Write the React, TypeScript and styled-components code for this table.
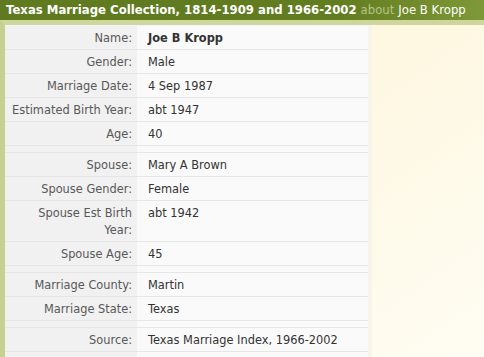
import React from 'react';
import styled, { createGlobalStyle } from 'styled-components';

const GlobalStyle = createGlobalStyle`
  html, body {
    margin: 0;
    padding: 0;
    background: #fdf7df;
    font-family: "DejaVu Sans", Verdana, sans-serif;
  }
`;

const Page = styled.div`
  width: 484px;
  height: 357px;
  overflow: hidden;
  display: flex;
  flex-direction: column;
  background: #fdf7df;
`;

const TitleBar = styled.div`
  height: 20px;
  flex: none;
  display: flex;
  align-items: center;
  padding-left: 6px;
  background: linear-gradient(to right, #5f7a1f 0%, #627d20 70%, #7f9838 100%);
  color: #fff;
  font-size: 11.7px;
  white-space: nowrap;
`;

const TitleMain = styled.span`
  font-weight: bold;
`;

const About = styled.span`
  color: #b9c487;
  margin: 0 4px;
`;

const Body = styled.div`
  flex: 1;
  display: flex;
  border-top: 5px solid #cdd79c;
  border-left: 5px solid #c6d190;
  background: linear-gradient(to bottom right, #fdf5d6 0%, #fef9e6 60%, #fffcf3 100%);
`;

const Table = styled.div`
  width: 363px;
  flex: none;
  display: flex;
  flex-direction: column;
  border-top: 1px solid #f6f6f6;
  background: linear-gradient(to right, #f1f1f1 0, #f1f1f1 132px, #fafafa 132px);
  border-right: 4px solid #f7f4e9;
`;

const Row = styled.div`
  display: grid;
  grid-template-columns: 132px 1fr;
  border-bottom: 1px solid #e6e6e6;
  font-size: 11.4px;
  line-height: 17px;
`;

const Spacer = styled.div`
  height: 6px;
  border-bottom: 1px solid #e6e6e6;
`;

const Label = styled.div`
  color: #585858;
  text-align: right;
  padding: 4px 5px 2px 3px;
`;

const Value = styled.div<{ $bold?: boolean }>`
  color: #333;
  padding: 4px 8px 2px 11px;
  font-weight: ${p => (p.$bold ? 'bold' : 'normal')};
`;

const groups: { label: string; value: string; bold?: boolean }[][] = [
  [
    { label: 'Name:', value: 'Joe B Kropp', bold: true },
    { label: 'Gender:', value: 'Male' },
    { label: 'Marriage Date:', value: '4 Sep 1987' },
    { label: 'Estimated Birth Year:', value: 'abt 1947' },
    { label: 'Age:', value: '40' },
  ],
  [
    { label: 'Spouse:', value: 'Mary A Brown' },
    { label: 'Spouse Gender:', value: 'Female' },
    { label: 'Spouse Est Birth Year:', value: 'abt 1942' },
    { label: 'Spouse Age:', value: '45' },
  ],
  [
    { label: 'Marriage County:', value: 'Martin' },
    { label: 'Marriage State:', value: 'Texas' },
  ],
  [{ label: 'Source:', value: 'Texas Marriage Index, 1966-2002' }],
];

export default function App() {
  return (
    <>
      <GlobalStyle />
      <Page>
        <TitleBar>
          <TitleMain>Texas Marriage Collection, 1814-1909 and 1966-2002</TitleMain>
          <About>about</About>
          Joe B Kropp
        </TitleBar>
        <Body>
          <Table>
            {groups.map((g, gi) => (
              <React.Fragment key={gi}>
                {gi > 0 && <Spacer />}
                {g.map(r => (
                  <Row key={r.label}>
                    <Label>{r.label}</Label>
                    <Value $bold={r.bold}>{r.value}</Value>
                  </Row>
                ))}
              </React.Fragment>
            ))}
          </Table>
        </Body>
      </Page>
    </>
  );
}
